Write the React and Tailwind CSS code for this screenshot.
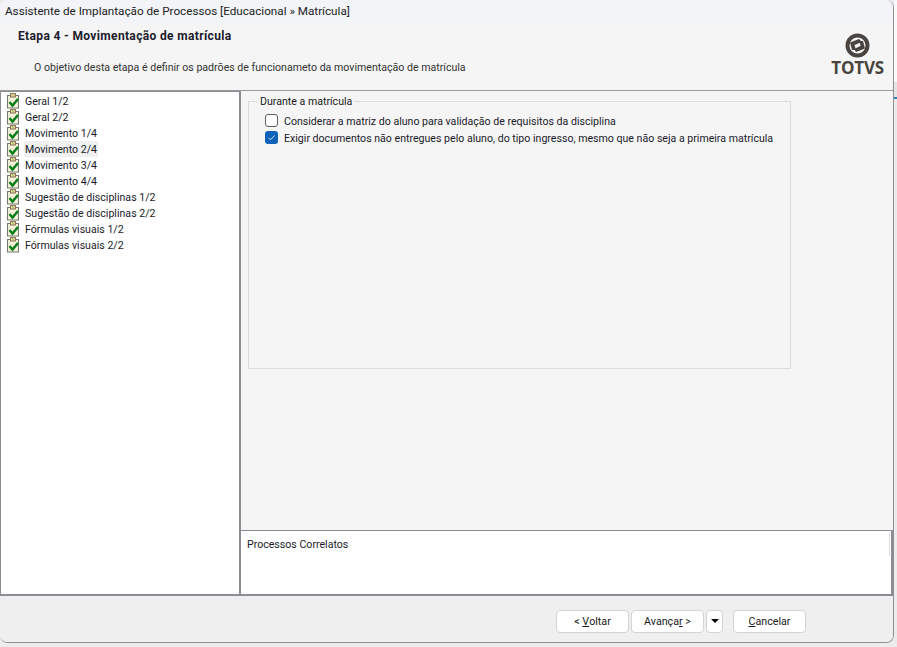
const steps = [
  'Geral 1/2',
  'Geral 2/2',
  'Movimento 1/4',
  'Movimento 2/4',
  'Movimento 3/4',
  'Movimento 4/4',
  'Sugestão de disciplinas 1/2',
  'Sugestão de disciplinas 2/2',
  'Fórmulas visuais 1/2',
  'Fórmulas visuais 2/2',
]

const StepIcon = () => (
  <svg width="15" height="16" viewBox="0 0 15 16" className="shrink-0">
    <rect x="1.5" y="2.5" width="11" height="12.5" fill="#f4efd8" stroke="#6f7a70" />
    <rect x="4.5" y="0.5" width="5" height="3.5" fill="#d8c98e" stroke="#8a7d55" />
    <path d="M3.5 9 L6.5 12.5 L12 6" fill="none" stroke="#0b7f1a" strokeWidth="2.6" />
  </svg>
)

const TotvsLogo = () => (
  <div className="flex flex-col items-center">
    <svg width="25" height="25" viewBox="0 0 25 25">
      <circle cx="12.5" cy="12.5" r="10" fill="#f5f5f5" stroke="#4a4540" strokeWidth="4" />
      <path d="M5 9.5 L14 6 L17 9 L9.5 12 L11 17 L7 17 Z" fill="#4a4540" />
      <path d="M20 15.5 L11 19 L9 16 L15.5 13 L14.5 8 L18 8 Z" fill="#4a4540" />
    </svg>
    <span className="mt-[1px] font-['Open_Sans',sans-serif] text-[17px] leading-[18px] font-bold tracking-[-0.2px] text-[#4a4540]">TOTVS</span>
  </div>
)

const Button = ({ children, className }) => (
  <button className={`h-[23px] pt-[2px] bg-white border border-[#d4d4d4] rounded-[4px] text-[10.7px] text-[#1a1a1a] flex items-center justify-center whitespace-pre ${className}`}>
    {children}
  </button>
)

const App = () => {
  return (
    <div className="h-[647px] w-[897px] flex bg-[#ececec] font-['Roboto',sans-serif] text-[10.6px] text-[#1a1a2a] overflow-hidden">
      <div className="h-[643px] w-[894px] shrink-0 flex flex-col bg-[#f5f5f5] rounded-[8px] border-r border-b border-[#8f8f8f] overflow-hidden">
        <div className="h-[23px] shrink-0 bg-[#f3f4f8] pl-[5px] flex items-center text-[11.7px] text-[#222]">
          Assistente de Implantação de Processos [Educacional » Matrícula]
        </div>

        <div className="h-[68px] shrink-0 flex justify-between pr-[9px] border-b border-[#9a9a9a]">
          <div>
            <div className="pl-[18px] pt-[5px] text-[12px] font-bold tracking-[0.35px] text-[#1c1c2c] leading-[16px]">Etapa 4 - Movimentação de matrícula</div>
            <div className="pl-[34px] pt-[16px] text-[#333] leading-[16px]">O objetivo desta etapa é definir os padrões de funcionameto da movimentação de matrícula</div>
          </div>
          <div className="pt-[10px]"><TotvsLogo /></div>
        </div>

        <div className="h-[505px] shrink-0 flex">
          <div className="w-[241px] shrink-0 bg-white border-l border-r-2 border-t border-b-2 border-[#8c8c94] pt-[1px] pl-[5px]">
            {steps.map((step) => (
              <div key={step} className="h-[16px] flex items-center gap-[3px]">
                <StepIcon />
                <span className={`h-[16px] px-[1px] leading-[18px] ${step === 'Movimento 2/4' ? 'bg-[#f0f0f0]' : ''}`}>{step}</span>
              </div>
            ))}
          </div>

          <div className="flex-1 min-w-0 flex flex-col">
            <div className="flex-1 pt-[2px] pl-[7px]">
              <fieldset className="w-[543px] h-[276px] border border-[#dcdcdc] pl-[9px]">
                <legend className="h-[16px] px-[2px] leading-[18px] text-[#1a1a1a]">Durante a matrícula</legend>
                <label className="mt-[3px] flex items-center gap-[6px] h-[17px] pl-[7px] whitespace-nowrap">
                  <span className="w-[13px] h-[13px] rounded-[3px] border border-[#5f5f5f] bg-white shrink-0" />
                  <span className="pt-[2px]">Considerar a matriz do aluno para validação de requisitos da disciplina</span>
                </label>
                <label className="flex items-center gap-[6px] h-[17px] pl-[7px] whitespace-nowrap">
                  <span className="w-[13px] h-[13px] rounded-[3px] bg-[#0f62b8] shrink-0 flex items-center justify-center">
                    <svg width="9" height="9" viewBox="0 0 9 9"><path d="M1.5 4.8 L3.5 6.8 L7.5 2.5" fill="none" stroke="#cfe3f7" strokeWidth="1" /></svg>
                  </span>
                  <span className="pt-[2px]">Exigir documentos não entregues pelo aluno, do tipo ingresso, mesmo que não seja a primeira matrícula</span>
                </label>
              </fieldset>
            </div>
            <div className="relative h-[66px] shrink-0 bg-white border-t border-b-2 border-r-2 border-[#8c8c94] pl-[6px] pt-[6px] leading-[16px]">
              Processos Correlatos
              <span className="absolute right-[1px] top-[1px] w-[1px] h-[24px] bg-[#dcdcdc]" />
            </div>
          </div>
        </div>

        <div className="flex-1 flex items-start pt-[14px] pl-[556px] bg-[#efefef]">
          <Button className="w-[73px]">{'< '}<u>V</u>oltar</Button>
          <Button className="w-[73px] ml-[2px]">Avança<u>r</u>{' >'}</Button>
          <Button className="w-[17px] ml-[2px]"><span className="mb-[4px] w-0 h-0 border-x-[4.5px] border-x-transparent border-t-[4px] border-t-black" /></Button>
          <Button className="w-[73px] ml-[10px]"><u>C</u>ancelar</Button>
        </div>
      </div>
      <div className="flex-1 flex flex-col">
        <div className="h-[82px] bg-[#fafafa]" />
        <div className="h-[15px] bg-[#e4e4e4]" />
        <div className="h-[2px] bg-[#2f7fb8]" />
        <div className="flex-1 bg-[#ececec]" />
      </div>
    </div>
  )
}

export default App
